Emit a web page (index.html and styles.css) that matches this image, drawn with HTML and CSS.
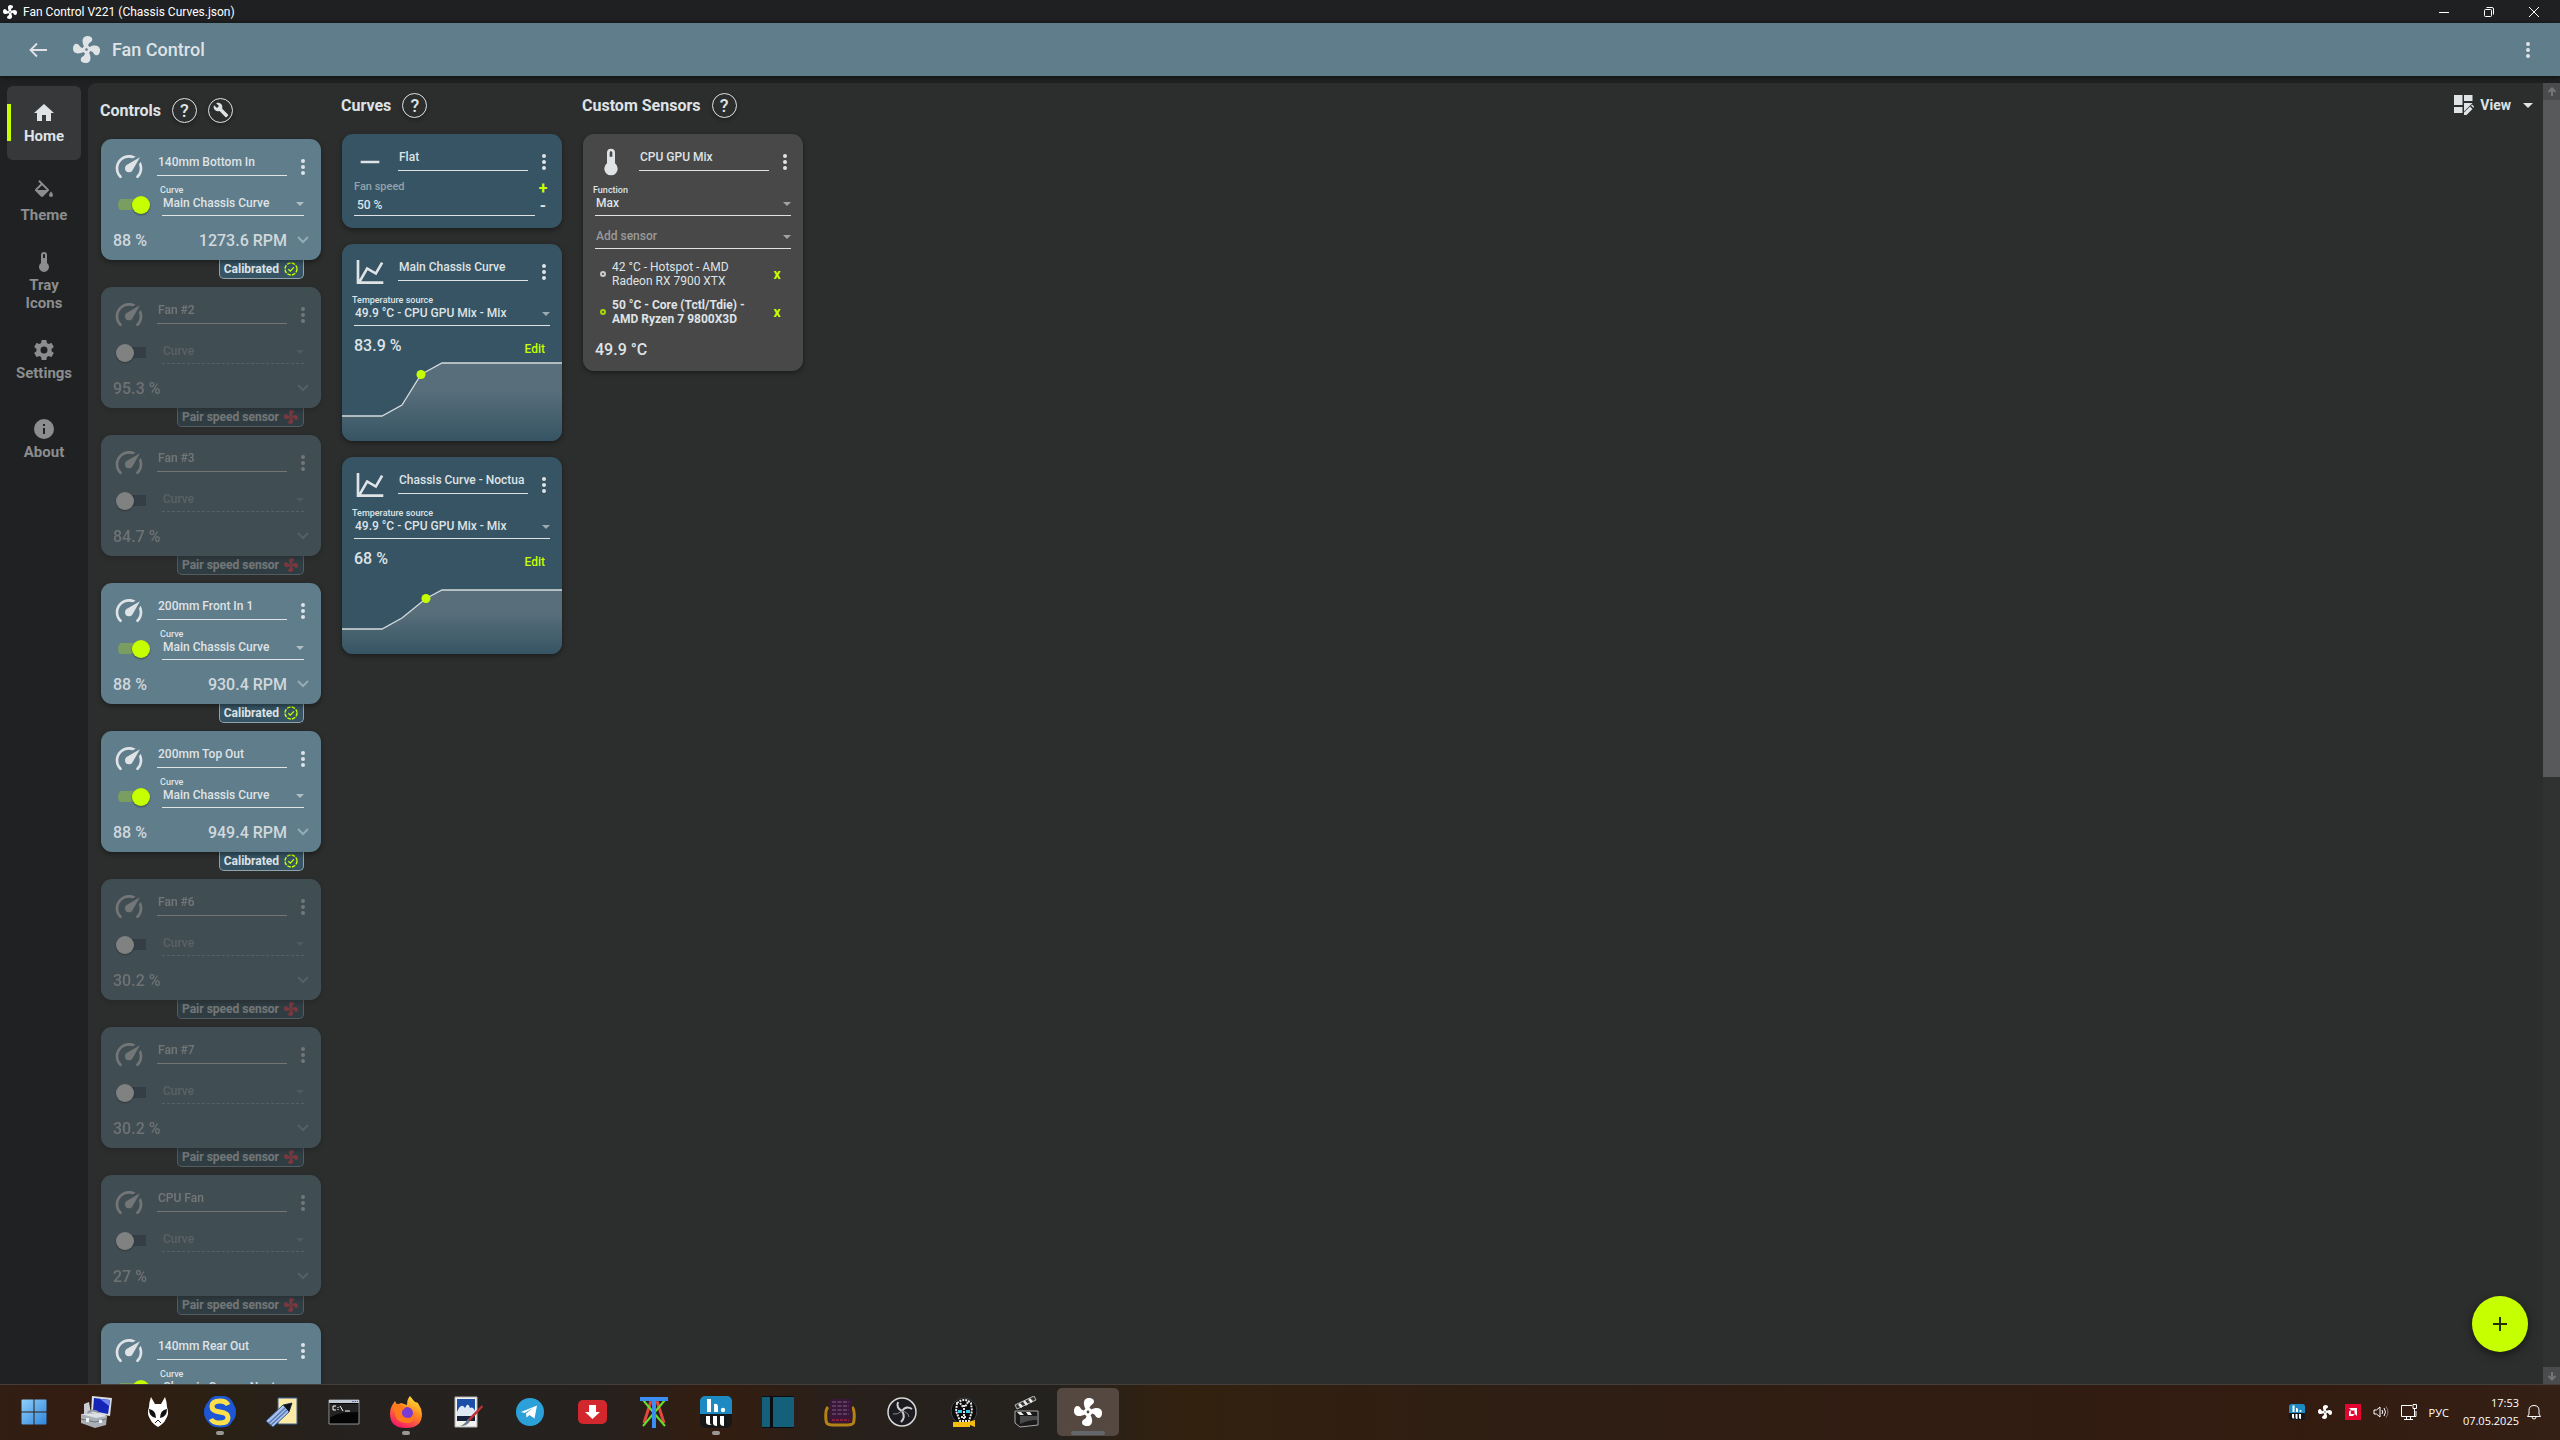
FILE: index.html
```html
<!DOCTYPE html>
<html lang="en">

<head>
    <meta charset="UTF-8">
    <meta name="viewport" content="width=device-width, initial-scale=1.0">
    <title>Fan Control</title>
    <link rel="stylesheet" href="styles.css">
</head>

<body>

    <svg class="sprite" aria-hidden="true">
        <symbol id="fan" viewBox="2 2 20 20">
            <path d="M12,11A1,1 0 0,0 11,12A1,1 0 0,0 12,13A1,1 0 0,0 13,12A1,1 0 0,0 12,11M12.5,2C17,2 17.11,5.57 14.75,6.75C13.76,7.24 13.32,8.29 13.13,9.22C13.61,9.42 14.03,9.73 14.35,10.13C18.05,8.13 22.03,8.92 22.03,12.5C22.03,17 18.46,17.1 17.28,14.73C16.78,13.74 15.72,13.3 14.79,13.11C14.59,13.59 14.28,14 13.88,14.34C15.87,18.03 15.08,22 11.5,22C7,22 6.91,18.42 9.27,17.24C10.25,16.75 10.69,15.71 10.89,14.79C10.4,14.59 9.97,14.27 9.65,13.87C5.96,15.85 2,15.07 2,11.5C2,7 5.56,6.89 6.74,9.26C7.24,10.25 8.29,10.68 9.22,10.87C9.41,10.39 9.73,9.97 10.14,9.65C8.15,5.96 8.94,2 12.5,2Z" />
        </symbol>
        <symbol id="gauge" viewBox="0 0 24 24">
            <path d="M12,16A3,3 0 0,1 9,13C9,11.88 9.61,10.9 10.5,10.39L20.21,4.77L14.68,14.35C14.18,15.33 13.17,16 12,16M12,3C13.81,3 15.5,3.5 16.97,4.32L14.87,5.53C14,5.19 13,5 12,5A8,8 0 0,0 4,13C4,15.21 4.89,17.21 6.34,18.65H6.35C6.74,19.04 6.74,19.67 6.35,20.06C5.96,20.45 5.32,20.45 4.93,20.07V20.07C3.12,18.26 2,15.76 2,13A10,10 0 0,1 12,3M22,13C22,15.76 20.88,18.26 19.07,20.07V20.07C18.68,20.45 18.05,20.45 17.66,20.06C17.27,19.67 17.27,19.04 17.66,18.65V18.65C19.11,17.2 20,15.21 20,13C20,12 19.81,11 19.46,10.1L20.67,8C21.5,9.5 22,11.18 22,13Z" />
        </symbol>
        <symbol id="chart" viewBox="0 0 24 24">
            <path d="M16,11.78L20.24,4.45L21.97,5.45L16.74,14.5L10.23,10.75L5.46,19H22V21H2V3H4V17.54L9.5,8L16,11.78Z" />
        </symbol>
        <symbol id="minus" viewBox="0 0 24 24">
            <path d="M19,13H5V11H19V13Z" />
        </symbol>
        <symbol id="thermometer" viewBox="0 0 24 24">
            <path fill-rule="evenodd" d="M15 13V5A3 3 0 0 0 9 5V13A5 5 0 1 0 15 13M12 4A1 1 0 0 1 13 5V8H11V5A1 1 0 0 1 12 4Z" />
        </symbol>
        <symbol id="dots" viewBox="0 0 8 24">
            <circle cx="4" cy="6" r="2" />
            <circle cx="4" cy="12" r="2" />
            <circle cx="4" cy="18" r="2" />
        </symbol>
        <symbol id="chevron" viewBox="0 0 12 8">
            <path d="M1 1l5 5 5-5" fill="none" stroke="currentColor" stroke-width="2" />
        </symbol>
        <symbol id="check" viewBox="0 0 14 14">
            <circle cx="7" cy="7" r="6" fill="none" stroke="currentColor" stroke-width="1.4" stroke-dasharray="3.6 1.1" />
            <path d="M4.4 7.2l1.9 1.9 3.6-3.7" fill="none" stroke="currentColor" stroke-width="1.3" />
        </symbol>
        <symbol id="meter" viewBox="0 0 32 32">
            <rect width="32" height="32" rx="5" fill="#171717" />
            <path d="M0 18V5a5 5 0 0 1 5-5h22a5 5 0 0 1 5 5v13z" fill="#1d8ac4" />
            <path d="M7 3h4v13H7zM14 8q4-1 4 3v5h-4z" fill="#fff" />
            <circle cx="23" cy="14" r="2.2" fill="#fff" />
            <path d="M6 20h4v7q0 2 2 2h-2q-4 0-4-3zM13 20h4v10q-4 0-4-3zM20 20h4v10q-4 0-4-3z" fill="#fff" />
        </symbol>
    </svg>

    <div class="titlebar">
        <svg class="title-icon"><use href="#fan" /></svg>
        <span class="title-text">Fan Control V221 (Chassis Curves.json)</span>
        <button class="win-btn" aria-label="Minimize"><svg width="12" height="12" viewBox="0 0 12 12"><path d="M1 6.500h10" /></svg></button>
        <button class="win-btn" aria-label="Restore"><svg width="12" height="12" viewBox="0 0 12 12"><rect x="1.500" y="3.500" width="7" height="7" rx="1" /><path d="M3.500 1.500h5.500q1.500 0 1.500 1.500v5.500" /></svg></button>
        <button class="win-btn" aria-label="Close"><svg width="12" height="12" viewBox="0 0 12 12"><path d="M1 1l10 10M11 1L1 11" /></svg></button>
    </div>

    <header class="header">
        <button class="back" aria-label="Back"><svg width="18" height="16" viewBox="0 0 18 16"><path d="M18 8H1.500M8 1.500L1.500 8 8 14.500" fill="none" stroke="currentColor" stroke-width="1.800" /></svg></button>
        <svg class="logo"><use href="#fan" /></svg>
        <h1 class="app-name">Fan Control</h1>
        <button class="dots" aria-label="Menu"><svg><use href="#dots" /></svg></button>
    </header>

    <div class="main">
        <nav class="nav">
            <a href="#home" class="nav-item active">
                <svg viewBox="0 0 24 24"><path d="M10,20V14H14V20H19V12H22L12,3L2,12H5V20H10Z" /></svg>
                Home
            </a>
            <a href="#theme" class="nav-item">
                <svg viewBox="0 0 24 24"><path d="M19,11.5C19,11.5 17,13.67 17,15A2,2 0 0,0 19,17A2,2 0 0,0 21,15C21,13.67 19,11.5 19,11.5M5.21,10L10,5.21L14.79,10M16.56,8.94L7.62,0L6.21,1.41L8.59,3.79L3.44,8.94C2.85,9.5 2.85,10.47 3.44,11.06L8.94,16.56C9.23,16.85 9.62,17 10,17C10.38,17 10.77,16.85 11.06,16.56L16.56,11.06C17.15,10.47 17.15,9.5 16.56,8.94Z" /></svg>
                Theme
            </a>
            <a href="#tray" class="nav-item">
                <svg><use href="#thermometer" /></svg>
                Tray Icons
            </a>
            <a href="#settings" class="nav-item">
                <svg viewBox="0 0 24 24"><path d="M12,15.5A3.5,3.5 0 0,1 8.5,12A3.5,3.5 0 0,1 12,8.5A3.5,3.5 0 0,1 15.5,12A3.5,3.5 0 0,1 12,15.5M19.43,12.97C19.47,12.65 19.5,12.33 19.5,12C19.5,11.67 19.47,11.34 19.43,11L21.54,9.37C21.73,9.22 21.78,8.95 21.66,8.73L19.66,5.27C19.54,5.05 19.27,4.96 19.05,5.05L16.56,6.05C16.04,5.66 15.5,5.32 14.87,5.07L14.5,2.42C14.46,2.18 14.25,2 14,2H10C9.75,2 9.54,2.18 9.5,2.42L9.13,5.07C8.5,5.32 7.96,5.66 7.44,6.05L4.95,5.05C4.73,4.96 4.46,5.05 4.34,5.27L2.34,8.73C2.21,8.95 2.27,9.22 2.46,9.37L4.57,11C4.53,11.34 4.5,11.67 4.5,12C4.5,12.33 4.53,12.65 4.57,12.97L2.46,14.63C2.27,14.78 2.21,15.05 2.34,15.27L4.34,18.73C4.46,18.95 4.73,19.03 4.95,18.95L7.44,17.94C7.96,18.34 8.5,18.68 9.13,18.93L9.5,21.58C9.54,21.82 9.75,22 10,22H14C14.25,22 14.46,21.82 14.5,21.58L14.87,18.93C15.5,18.67 16.04,18.34 16.56,17.94L19.05,18.95C19.27,19.03 19.54,18.95 19.66,18.73L21.66,15.27C21.78,15.05 21.73,14.78 21.54,14.63L19.43,12.97Z" /></svg>
                Settings
            </a>
            <a href="#about" class="nav-item">
                <svg viewBox="0 0 24 24"><path fill-rule="evenodd" d="M13,9H11V7H13M13,17H11V11H13M12,2A10,10 0 1,0 12,22A10,10 0 1,0 12,2Z" /></svg>
                About
            </a>
        </nav>

        <main class="content">
            <section class="column controls">
                <div class="heading">
                    <h2>Controls</h2>
                    <button class="round" aria-label="Help">?</button>
                    <button class="round" aria-label="Setup"><svg width="16" height="16" viewBox="0 0 24 24"><path d="M22.7,19L13.6,9.9C14.5,7.6 14,4.9 12.1,3C10.1,1 7.1,0.6 4.7,1.7L9,6L6,9L1.6,4.7C0.4,7.1 0.9,10.1 2.9,12.1C4.8,14 7.5,14.5 9.8,13.6L18.9,22.7C19.3,23.1 19.9,23.1 20.3,22.7L22.6,20.4C23.1,20 23.1,19.3 22.7,19Z" /></svg></button>
                </div>
                <div class="control-list"></div>
            </section>

            <section class="column">
                <div class="heading">
                    <h2>Curves</h2>
                    <button class="round" aria-label="Help">?</button>
                </div>

                <div class="card curve">
                    <div class="card-head">
                        <svg class="card-icon"><use href="#minus" /></svg>
                        <input class="name" type="text" value="Flat" aria-label="Name">
                        <button class="dots" aria-label="Menu"><svg><use href="#dots" /></svg></button>
                    </div>
                    <div class="speed">
                        <div class="speed-field">
                            <label for="flat-speed">Fan speed</label>
                            <input id="flat-speed" type="text" value="50 %">
                        </div>
                        <div class="steps">
                            <button class="plus">+</button>
                            <button>-</button>
                        </div>
                    </div>
                </div>

                <div class="card curve">
                    <div class="card-head">
                        <svg class="card-icon"><use href="#chart" /></svg>
                        <input class="name" type="text" value="Main Chassis Curve" aria-label="Name">
                        <button class="dots" aria-label="Menu"><svg><use href="#dots" /></svg></button>
                    </div>
                    <div class="field wide">
                        <label for="source-1">Temperature source</label>
                        <select id="source-1"><option>49.9 °C - CPU GPU Mix - Mix</option></select>
                    </div>
                    <div class="reading">
                        <span>83.9 %</span>
                        <button class="edit">Edit</button>
                    </div>
                    <svg class="graph" viewBox="0 0 220 85" preserveAspectRatio="none">
                        <linearGradient id="fade" x1="0" y1="0" x2="0" y2="1">
                            <stop offset="0.350" stop-color="#586e7b" />
                            <stop offset="1" stop-color="#365463" />
                        </linearGradient>
                        <path d="M0 60H40L60 49 79 18.500 100 7H220V85H0z" fill="url(#fade)" />
                        <path d="M0 60H40L60 49 79 18.500 100 7H220" fill="none" stroke="#d5dadd" stroke-width="1.300" />
                        <circle cx="79" cy="18.500" r="4.500" fill="#c6ff00" />
                    </svg>
                </div>

                <div class="card curve">
                    <div class="card-head">
                        <svg class="card-icon"><use href="#chart" /></svg>
                        <input class="name" type="text" value="Chassis Curve - Noctua" aria-label="Name">
                        <button class="dots" aria-label="Menu"><svg><use href="#dots" /></svg></button>
                    </div>
                    <div class="field wide">
                        <label for="source-2">Temperature source</label>
                        <select id="source-2"><option>49.9 °C - CPU GPU Mix - Mix</option></select>
                    </div>
                    <div class="reading">
                        <span>68 %</span>
                        <button class="edit">Edit</button>
                    </div>
                    <svg class="graph" viewBox="0 0 220 85" preserveAspectRatio="none">
                        <path d="M0 60H40L60 49 84 29.500 100 21H220V85H0z" fill="url(#fade)" />
                        <path d="M0 60H40L60 49 84 29.500 100 21H220" fill="none" stroke="#d5dadd" stroke-width="1.300" />
                        <circle cx="84" cy="29.500" r="4.500" fill="#c6ff00" />
                    </svg>
                </div>
            </section>

            <section class="column">
                <div class="heading">
                    <h2>Custom Sensors</h2>
                    <button class="round" aria-label="Help">?</button>
                </div>

                <div class="card sensor">
                    <div class="card-head">
                        <svg class="card-icon"><use href="#thermometer" /></svg>
                        <input class="name" type="text" value="CPU GPU Mix" aria-label="Name">
                        <button class="dots" aria-label="Menu"><svg><use href="#dots" /></svg></button>
                    </div>
                    <div class="field wide">
                        <label for="function">Function</label>
                        <select id="function"><option>Max</option></select>
                    </div>
                    <div class="field add-sensor">
                        <select aria-label="Add sensor"><option>Add sensor</option></select>
                    </div>
                    <ul class="sources">
                        <li><i></i><span>42 °C - Hotspot - AMD Radeon RX 7900 XTX</span><button>x</button></li>
                        <li class="top"><i></i><span>50 °C - Core (Tctl/Tdie) - AMD Ryzen 7 9800X3D</span><button>x</button></li>
                    </ul>
                    <div class="reading">
                        <span>49.9 °C</span>
                    </div>
                </div>
            </section>

            <button class="view">
                <svg width="20" height="20" viewBox="0 0 20 20"><path d="M0 0h8.500v10H0zM10 0h8.500v6H10zM0 12h8.500v6H0zM10 8h8.500L10 16.500zM10 20v-2.500l6-6 2.500 2.500-6 6zM17 10.500l1-1 2.300 2.300-1 1z" /></svg>
                View
                <span class="arrow"></span>
            </button>
        </main>

        <div class="scrollbar">
            <div class="scroll-end"><svg width="10" height="10" viewBox="0 0 10 10"><path d="M5 9V2M1.500 5L5 1.500 8.500 5" /></svg></div>
            <div class="scroll-thumb"></div>
            <div class="scroll-end"><svg width="10" height="10" viewBox="0 0 10 10"><path d="M5 1v7M1.500 5L5 8.500 8.500 5" /></svg></div>
        </div>

        <button class="fab" aria-label="Add"><svg width="14" height="14" viewBox="0 0 14 14"><path d="M0 7h14M7 0v14" stroke="#263000" stroke-width="2" /></svg></button>
    </div>

    <footer class="taskbar">
        <button class="task" aria-label="Start">
            <svg viewBox="0 0 32 32">
                <linearGradient id="win" x1="0" y1="0" x2="1" y2="1"><stop stop-color="#8fd0fb" /><stop offset="1" stop-color="#2f86dc" /></linearGradient>
                <path fill="url(#win)" d="M3.500 4.500a1 1 0 0 1 1-1h11v12h-12zM16.500 3.500h11a1 1 0 0 1 1 1v11h-12zM3.500 16.500h12v12h-11a1 1 0 0 1-1-1zM16.500 16.500h12v11a1 1 0 0 1-1 1h-11z" />
            </svg>
        </button>
        <button class="task" aria-label="Computer Management">
            <svg viewBox="0 0 32 32">
                <path d="M4 8l5-2 2 12-7 2z" fill="#c9cdd2" />
                <path d="M12 0l20 2-2 18-19-3z" fill="#d9dde2" />
                <path d="M14 2l16 2-2 14-15-3z" fill="#1424b8" />
                <path d="M20 3l10 1-1 6z" fill="#6e86ee" />
                <path d="M8 18c0-5 10-4 11 0" fill="none" stroke="#8d949a" stroke-width="2" />
                <path d="M1 18l18-1 8 3-1 9-11 3-14-5z" fill="#a9b0b6" />
                <path d="M1 18l18-1 8 3-11 2z" fill="#dde1e4" />
                <path d="M1 23l14 3 11-3" fill="none" stroke="#6c7378" />
                <path d="M6 22h3v4H6zM19 24h3v3h-3z" fill="#f2f4f5" />
            </svg>
        </button>
        <button class="task" aria-label="foobar2000">
            <svg viewBox="0 0 32 32">
                <path d="M9 1l4 7h6l4-7q2 5 2 10 2 6 0 10-2 5-6 8l-3 2-3-2q-4-3-6-8-2-4 0-10 0-5 2-10z" fill="#fff" />
                <path d="M7 13q7 1 7 9-7-1-7-9zM25 13q-7 1-7 9 7-1 7-9z" fill="#111" />
                <path d="M13 27l3-3 3 3" fill="none" stroke="#222" />
            </svg>
        </button>
        <button class="task" aria-label="Simple player">
            <svg viewBox="0 0 32 32">
                <ellipse cx="16" cy="16" rx="16" ry="15" fill="#1d57d6" />
                <path d="M25 9q-2-5-9-5-8 0-8 6 0 5 8 6 8 1 8 6 0 5-8 5-7 0-9-5" fill="none" stroke="#1d57d6" stroke-width="9" />
                <path d="M24 9q-2-4-8-4-8 0-8 5.500 0 4.500 8 5.500 8 1 8 5.500 0 5.500-8 5.500-7 0-9-4" fill="none" stroke="#ffe04a" stroke-width="5" />
            </svg>
            <span class="running"></span>
        </button>
        <button class="task" aria-label="Notes">
            <svg viewBox="0 0 32 32">
                <path d="M12 2h19v26H12z" fill="#fdeaa4" stroke="#3d6395" />
                <path d="M26 7l-3 9L7 31 0 25 17 9z" fill="#a9c3ee" stroke="#36588f" />
                <path d="M3 27L19 12M5 29L21 14" stroke="#5778b5" stroke-width="1.500" />
                <path d="M26 7l-3 9-6-7z" fill="#111" />
            </svg>
        </button>
        <button class="task" aria-label="Command Prompt">
            <svg viewBox="0 0 32 32">
                <path d="M1 4h30v24H1z" fill="#050505" stroke="#8e949b" />
                <path d="M1 4h30v3H1z" fill="#c3c9d2" />
                <path d="M24 5.500h6" stroke="#41609b" stroke-dasharray="1.500 1" />
                <path d="M8 10H5v4h3M10 11v1M10 13v1M12 10l3 5M17 15h5" fill="none" stroke="#fff" />
                <path d="M2 22q7-6 28-6V8H2z" fill="#fff" opacity=".12" />
            </svg>
        </button>
        <button class="task" aria-label="Firefox">
            <svg viewBox="0 0 32 32">
                <linearGradient id="fox" x1=".8" y1="0" x2=".3" y2="1"><stop stop-color="#ffe63b" /><stop offset=".45" stop-color="#ff8a1f" /><stop offset="1" stop-color="#f5156c" /></linearGradient>
                <path d="M20 0q3 4 5 6 3 0 4 3 3 4 3 9 0 14-16 14T0 18Q0 12 3 8l2-3 2 4 4-2 3 1 3 1q0-6 3-9z" fill="url(#fox)" />
                <circle cx="17" cy="17" r="6" fill="#7a3bd0" />
                <path d="M3 9q6-3 10 1l3 1-4 4q-1 7 6 7 6 0 6-7 3 10-6 12-10 1-13-8-1-5-2-10z" fill="#ff7a1c" />
            </svg>
            <span class="running"></span>
        </button>
        <button class="task" aria-label="Image editor">
            <svg viewBox="0 0 32 32">
                <path d="M3 1h22v30H3z" fill="#f2f2ee" stroke="#b5b5b0" />
                <path d="M5 3h18v22H5z" fill="#1b4fa8" />
                <path d="M5 16q4-10 8-4 3-7 5 0 3-2 5 3v6H5z" fill="#dfe9f4" />
                <path d="M5 20h18v5H5z" fill="#16233c" />
                <path d="M30 9L16 23l2 2L31 11z" fill="#c03030" />
                <path d="M16 23l2 2q-2 5-10 5 4-1 8-7z" fill="#6f7d8c" />
            </svg>
        </button>
        <button class="task" aria-label="Telegram">
            <svg viewBox="0 0 32 32">
                <circle cx="16" cy="16" r="14" fill="#2ca0d9" />
                <path d="M7 16l16-6.500-2.500 13-5-3.500-3 2.500-.5-4 7-5.500-8.500 5z" fill="#fff" />
            </svg>
        </button>
        <button class="task" aria-label="Downloader">
            <svg viewBox="0 0 32 32">
                <rect x="2" y="4" width="29" height="24" rx="5" fill="#d2282d" />
                <path d="M13 9h7v7h4l-7.500 7L9 16h4z" fill="#fff" />
            </svg>
        </button>
        <button class="task" aria-label="Network tool">
            <svg viewBox="0 0 32 32" fill="none" stroke-width="3">
                <path d="M13 5L6 27M19 5l7 22" stroke="#e5463e" />
                <path d="M5 4l22 26M27 4L5 30" stroke="#63e02f" stroke-width="2" />
                <path d="M2 3h28M16 3v29" stroke="#3b8df0" stroke-width="4" />
            </svg>
        </button>
        <button class="task" aria-label="Hardware monitor">
            <svg><use href="#meter" /></svg>
            <span class="running"></span>
        </button>
        <button class="task" aria-label="Panels">
            <svg viewBox="0 0 32 32">
                <path d="M0 0h32v32H0z" fill="#0a0d0f" />
                <path d="M0 1h8v30H0zM11 1h21v30H11z" fill="#145f7a" />
            </svg>
        </button>
        <button class="task" aria-label="Memory">
            <svg viewBox="0 0 32 32">
                <path d="M4 11q-3 3-2 13 0 5 6 5h16q6 0 6-5 1-10-2-13" fill="none" stroke="#b58218" stroke-width="3" />
                <path d="M5 3h23v24H5z" fill="#3a1638" />
                <path d="M8 6h17M8 10h17M8 14h17M8 18h17" stroke="#6a4a72" stroke-dasharray="4 1.500" stroke-width="1.500" />
                <path d="M8 24h17" stroke="#a3233a" stroke-width="1.500" stroke-dasharray="3 1" />
            </svg>
        </button>
        <button class="task" aria-label="OBS">
            <svg viewBox="0 0 32 32">
                <circle cx="16" cy="16" r="14" fill="#1c1b1f" stroke="#d8d8d8" stroke-width="1.500" />
                <path d="M12 6q-2 6 4 9M26 13q-6-4-10 2M15 26q5-5 1-11" fill="none" stroke="#cfcfcf" stroke-width="2" />
                <path d="M16 15q-5 4-9 3M16 15q6 1 7 6" fill="none" stroke="#8a8a8d" />
            </svg>
        </button>
        <button class="task" aria-label="Skull">
            <svg viewBox="0 0 32 32">
                <circle cx="16" cy="15" r="13" fill="#0b0b0c" stroke="#3f4446" />
                <path d="M9 7q7-6 14 0l1 8-3 10h-9L8 15z" fill="none" stroke="#e8e8e8" stroke-width="2" stroke-dasharray="2 1" />
                <path d="M12 7l3 4M20 6l-3 5M16 9v14M13 21h6" stroke="#ddd" stroke-dasharray="2 1" stroke-width="2" />
                <path d="M10 14h4v3h-4zM18 14h4v3h-4z" fill="#39c4ea" />
                <path d="M5 26h15l7-2v7l-5-2v2H5z" fill="#f3bd12" />
            </svg>
        </button>
        <button class="task" aria-label="Media Player">
            <svg viewBox="0 0 32 32">
                <path d="M5 9L24 0l2 4L7 13z" fill="#333" stroke="#b9b9b9" />
                <path d="M9 8l3 3M14 5l3 4M19 3l3 3" stroke="#eee" stroke-width="2.500" />
                <path d="M5 15h23v14l-18 2-5-4z" fill="#1a1a1a" stroke="#a9a9a9" />
                <path d="M7 16l3 3h4l-3-3zM16 16l2 3h4l-2-3z" fill="#eee" />
                <path d="M10 20h17v4q-9 0-17 4z" fill="#4a4a4a" />
            </svg>
        </button>
        <button class="task current" aria-label="Fan Control">
            <svg class="task-fan"><use href="#fan" /></svg>
            <span class="running"></span>
        </button>

        <div class="tray">
            <svg><use href="#meter" /></svg>
            <svg class="tray-fan"><use href="#fan" /></svg>
            <svg viewBox="0 0 16 16"><path d="M0 0h16v16H0z" fill="#e0062f" /><path d="M4 4h8v8L9.500 9.500v-3h-3zM4 7.500L5.800 6v4h4L8 12H4z" fill="#fff" /></svg>
            <svg viewBox="0 0 16 16" fill="none" stroke="#fff"><path d="M1 6h2.500L7 3v10L3.500 10H1z" /><path d="M9 6q1.500 2 0 4M11 4q3 4 0 8" /><path d="M13 2.500q4 5.500 0 11" opacity=".4" /></svg>
            <svg viewBox="0 0 16 16" fill="none" stroke="#fff"><path d="M11 1.500H.500v11H15V7M3 15.500h9M5.500 13v2M9.500 13v2M12 .500h3.500v4H12zM13.500 5v8" /></svg>
            <span class="lang">РУС</span>
            <div class="clock"><time>17:53</time><time>07.05.2025</time></div>
            <svg viewBox="0 0 16 16" fill="none" stroke="#fff"><path d="M1.500 12.500h13L13 10V6.500Q13 1.500 8 1.500T3 6.500V10zM6 13q0 2 2 2t2-2" /></svg>
        </div>
    </footer>

    <script>

        let controls = [
            { name: "140mm Bottom In", curve: "Main Chassis Curve", percent: "88 %", rpm: "1273.6 RPM" },
            { name: "Fan #2", percent: "95.3 %" },
            { name: "Fan #3", percent: "84.7 %" },
            { name: "200mm Front In 1", curve: "Main Chassis Curve", percent: "88 %", rpm: "930.4 RPM" },
            { name: "200mm Top Out", curve: "Main Chassis Curve", percent: "88 %", rpm: "949.4 RPM" },
            { name: "Fan #6", percent: "30.2 %" },
            { name: "Fan #7", percent: "30.2 %" },
            { name: "CPU Fan", percent: "27 %" },
            { name: "140mm Rear Out", curve: "Chassis Curve - Noctua" }
        ];

        makeControls()
        function makeControls() {
            let list = document.querySelector(".control-list");
            controls.forEach((element, i) => {
                let on = element.curve !== undefined;
                // no reading yet: card without values and badge
                let values = "";
                let badge = "";
                if (element.percent) {
                    values = `
                        <div class="values">
                            <span>${element.percent}</span>
                            <span class="rpm">${element.rpm || ""}</span>
                            <button class="expand" aria-label="Expand"><svg width="12" height="8"><use href="#chevron" /></svg></button>
                        </div>`;
                    badge = `
                    <div class="badge">
                        ${on ? "Calibrated" : "Pair speed sensor"}
                        <svg><use href="#${on ? "check" : "fan"}" /></svg>
                    </div>`;
                }
                list.innerHTML += `
                <div class="control ${on ? "" : "off"}">
                    <div class="card">
                        <div class="card-head">
                            <svg class="card-icon"><use href="#gauge" /></svg>
                            <input class="name" type="text" value="${element.name}" aria-label="Name">
                            <button class="dots" aria-label="Menu"><svg><use href="#dots" /></svg></button>
                        </div>
                        <div class="control-row">
                            <input class="toggle" type="checkbox" aria-label="Enabled" ${on ? "checked" : ""}>
                            <div class="field">
                                <label for="curve-${i}">Curve</label>
                                <select id="curve-${i}" ${on ? "" : "disabled"}><option>${element.curve || "Curve"}</option></select>
                            </div>
                        </div>
                        ${values}
                    </div>
                    ${badge}
                </div>
                `
            })
        }

    </script>

</body>

</html>
```

FILE: styles.css
```css
* {
    box-sizing: border-box;
}

body {
    margin: 0;
    height: 100vh;
    display: flex;
    flex-direction: column;
    overflow: hidden;
    background-color: #1f2122;
    color: #dfe3e6;
    fill: currentColor;
    font-family: Roboto, "Liberation Sans", sans-serif;
    font-size: 12px;
    font-weight: 500;
}

button,
input,
select {
    margin: 0;
    padding: 0;
    border: none;
    border-radius: 0;
    background: none;
    color: inherit;
    fill: inherit;
    font: inherit;
    outline: none;
}

button {
    display: flex;
    align-items: center;
    justify-content: center;
    cursor: pointer;
}

.sprite {
    display: none;
}

/* window title */

.titlebar {
    height: 23px;
    flex: none;
    display: flex;
    align-items: center;
    padding: 0 4px 0 3px;
    background-color: #1f2022;
    font-weight: 400;
    color: #fff;
}

.title-icon {
    width: 14px;
    height: 14px;
    margin-right: 6px;
}

.title-text {
    flex: 1;
}

.win-btn {
    width: 45px;
    height: 20px;
    fill: none;
    stroke: #fff;
}

.header {
    height: 53px;
    flex: none;
    display: flex;
    align-items: center;
    padding: 0 24px 0 29px;
    background-color: #607d8b;
    box-shadow: 0 1px 5px rgba(0, 0, 0, 0.6);
    position: relative;
}

.logo {
    width: 27px;
    height: 27px;
    margin: 0 12px 0 26px;
}

.app-name {
    flex: 1;
    margin: 0;
    font-size: 18px;
    font-weight: 500;
}

.dots {
    width: 16px;
    height: 24px;
}

.dots svg {
    width: 8px;
    height: 24px;
}

/* side menu */

.main {
    flex: 1;
    min-height: 0;
    display: flex;
    padding-top: 7px;
    position: relative;
}

.nav {
    width: 88px;
    flex: none;
    display: flex;
    flex-direction: column;
    gap: 5px;
    padding: 3px 7px;
}

.nav-item {
    height: 74px;
    display: flex;
    flex-direction: column;
    align-items: center;
    justify-content: center;
    border-radius: 6px;
    color: #8b8d8e;
    font-size: 15px;
    font-weight: 700;
    line-height: 18px;
    text-align: center;
    text-decoration: none;
    padding: 0 12px;
    position: relative;
}

.nav-item svg {
    width: 24px;
    height: 24px;
    flex: none;
    margin-bottom: 2px;
}

.nav-item.active {
    background-color: #37383a;
    color: #dfe3e6;
}

.nav-item.active::before {
    content: "";
    width: 4px;
    height: 37px;
    background-color: #c6ff00;
    position: absolute;
    left: 0;
    top: 18px;
}

/* columns */

.content {
    flex: 1;
    display: flex;
    align-items: flex-start;
    gap: 21px;
    padding-left: 13px;
    background-color: #2c2e2d;
    border-top-left-radius: 8px;
    overflow: hidden;
}

.column {
    width: 220px;
    flex: none;
    display: flex;
    flex-direction: column;
    gap: 16px;
    padding-top: 9px;
}

.controls {
    padding-top: 14px;
}

.heading {
    height: 26px;
    display: flex;
    align-items: center;
    gap: 11px;
    margin-left: -1px;
}

.heading h2 {
    margin: 0;
    font-size: 16px;
    font-weight: 700;
}

.round {
    width: 25px;
    height: 25px;
    border: 1px solid #dfe3e6;
    border-radius: 50%;
    font-size: 18px;
    box-shadow: 0 2px 4px rgba(0, 0, 0, 0.3);
}

.view {
    height: 26px;
    gap: 6px;
    margin: 9px 10px 0 auto;
    font-size: 14px;
    font-weight: 700;
}

.arrow {
    margin-left: 6px;
    border: 5px solid transparent;
    border-top-color: #dfe3e6;
    border-bottom: none;
}

/* cards */

.card {
    border-radius: 11px;
    background-color: #607d8b;
    box-shadow: 0 2px 5px rgba(0, 0, 0, 0.4);
    overflow: hidden;
    position: relative;
}

.curve {
    background-color: #365463;
}

.sensor {
    background-color: #484848;
    padding-bottom: 11px;
}

.card-head {
    height: 44px;
    display: flex;
    align-items: center;
    gap: 8px;
    padding: 12px 10px 0 12px;
}

.card-icon {
    width: 32px;
    height: 32px;
    flex: none;
}

.name {
    flex: 1;
    min-width: 0;
    height: 25px;
    align-self: flex-start;
    margin-left: 4px;
    padding: 0 0 2px 1px;
    border-bottom: 1px solid #dfe3e6;
}

.control {
    display: flex;
    flex-direction: column;
    margin-bottom: 8px;
}

.control.off {
    opacity: 0.4;
}

.control-row {
    display: flex;
    align-items: center;
    gap: 12px;
    padding: 0 17px;
}

.toggle {
    appearance: none;
    width: 32px;
    height: 18px;
    flex: none;
    margin-top: 10px;
    border-radius: 9px;
    background: linear-gradient(#7a9d62, #7a9d62) left center / 28px 11px no-repeat;
    position: relative;
}

.toggle::before {
    content: "";
    width: 18px;
    height: 18px;
    border-radius: 50%;
    background-color: #c6ff00;
    box-shadow: 0 1px 2px rgba(0, 0, 0, 0.4);
    position: absolute;
    right: 0;
    top: 0;
}

.toggle:not(:checked) {
    background-image: linear-gradient(#425866, #425866);
}

.toggle:not(:checked)::before {
    background-color: #fff;
    right: auto;
    left: -2px;
}

.field {
    flex: 1;
    display: flex;
    flex-direction: column;
}

.field label {
    height: 12px;
    margin-left: -2px;
    font-size: 9px;
    line-height: 14px;
}

.field select {
    height: 21px;
    padding: 0 12px 4px 1px;
    appearance: none;
    border-bottom: 1px solid #dfe3e6;
    background: url("data:image/svg+xml,%3Csvg xmlns='http://www.w3.org/2000/svg' width='8' height='4'%3E%3Cpath d='M0 0h8L4 4z' fill='%23fff' fill-opacity='.5'/%3E%3C/svg%3E") right 7px no-repeat;
}

.field select:disabled {
    border-bottom-style: dashed;
    opacity: 0.5;
}

.off .field label {
    visibility: hidden;
}

.field.wide {
    padding: 5px 12px 0;
}

.add-sensor {
    padding: 12px 12px 0;
}

.add-sensor select {
    color: #9a9a9a;
}

.values {
    height: 44px;
    display: flex;
    align-items: center;
    gap: 10px;
    padding: 4px 12px 0;
    font-size: 16px;
}

.rpm {
    margin-left: auto;
}

.values,
.expand {
    color: #d0d8dc;
}

.expand svg {
    opacity: 0.5;
}

.badge {
    height: 19px;
    align-self: flex-end;
    display: flex;
    align-items: center;
    gap: 5px;
    margin-right: 17px;
    padding: 0 5px 0 4px;
    border: 1px solid #90a4ae;
    border-top: none;
    border-radius: 0 0 5px 5px;
    background-color: #365463;
    font-weight: 700;
}

.badge svg {
    width: 14px;
    height: 14px;
    color: #c6ff00;
}

.off .badge svg {
    color: #f04a5a;
}

/* curves */

.speed {
    display: flex;
    gap: 2px;
    padding: 2px 13px 12px 12px;
}

.speed-field {
    flex: 1;
    display: flex;
    flex-direction: column;
}

.speed-field label {
    font-size: 11px;
    line-height: 14px;
    color: #93a3ab;
}

.speed-field input {
    width: 100%;
    height: 22px;
    padding-left: 3px;
    border-bottom: 1px solid #dfe3e6;
}

.steps {
    width: 12px;
    font-size: 16px;
    font-weight: 700;
}

.steps button {
    width: 12px;
    height: 17px;
}

.steps .plus {
    color: #c6ff00;
}

.reading {
    display: flex;
    align-items: flex-end;
    justify-content: space-between;
    padding: 10px 17px 0 12px;
    font-size: 16px;
    line-height: 20px;
}

.edit {
    color: #c6ff00;
    font-size: 12px;
    line-height: 14px;
}

.graph {
    display: block;
    width: 100%;
    height: 85px;
}

/* sensors */

.sources {
    margin: 11px 0 4px;
    padding: 0 17px;
    display: flex;
    flex-direction: column;
    gap: 10px;
    list-style: none;
    font-weight: 400;
    line-height: 14px;
}

.sources li {
    display: flex;
    align-items: center;
}

.sources i {
    width: 6px;
    height: 6px;
    flex: none;
    margin-right: 6px;
    border: 2px solid #c9cccd;
    border-radius: 50%;
}

.sources span {
    flex: 1;
}

.sources button {
    width: 18px;
    color: #c6ff00;
    font-size: 14px;
    font-weight: 700;
}

.sources .top {
    font-weight: 700;
}

.sources .top i {
    border-color: #a9d80a;
}

/* scrollbar and add button */

.scrollbar {
    width: 17px;
    flex: none;
    display: flex;
    flex-direction: column;
    background-color: #303231;
}

.scroll-end {
    height: 17px;
    display: flex;
    align-items: center;
    justify-content: center;
    background-color: #4a4b4c;
    fill: none;
    stroke: #747576;
    stroke-width: 2;
}

.scroll-thumb {
    height: 52%;
    margin-bottom: auto;
    background-color: #58595b;
}

.fab {
    width: 56px;
    height: 56px;
    border-radius: 50%;
    background-color: #c6ff00;
    box-shadow: 0 3px 8px rgba(0, 0, 0, 0.5);
    position: absolute;
    right: 32px;
    bottom: 32px;
}

/* taskbar */

.taskbar {
    height: 56px;
    flex: none;
    display: flex;
    align-items: flex-start;
    padding: 3px 18px 0 3px;
    border-top: 1px solid #453f3b;
    background: linear-gradient(90deg, #321e14, #331c11 3%, #2b2013 8%, #252220 14%, #24211f 23%, #341d10 28%, #28201b 33%, #24221f 41%, #33210f 46%, #2e1e14 60%, #331b10 90%, #352015);
    font-family: "Open Sans", "Noto Sans", sans-serif;
    font-size: 11px;
    font-weight: 400;
    color: #fff;
}

.task {
    width: 62px;
    height: 48px;
    border-radius: 5px;
    position: relative;
}

.task svg {
    width: 32px;
    height: 32px;
}

.task .task-fan {
    width: 28px;
    height: 28px;
}

.current {
    background-color: #544840;
}

.running {
    width: 8px;
    height: 4px;
    border-radius: 2px;
    background-color: #9b9794;
    position: absolute;
    left: 27px;
    bottom: 1px;
}

.current .running {
    width: 34px;
    left: 14px;
    background-color: #63676b;
}

.tray {
    height: 48px;
    display: flex;
    align-items: center;
    gap: 12px;
    margin-left: auto;
}

.tray svg {
    width: 16px;
    height: 16px;
}

.tray .tray-fan {
    width: 14px;
    height: 14px;
    margin: 0 1px;
}

.clock {
    display: flex;
    flex-direction: column;
    line-height: 18px;
    text-align: right;
    margin: 0 -5px 0 2px;
}
```
